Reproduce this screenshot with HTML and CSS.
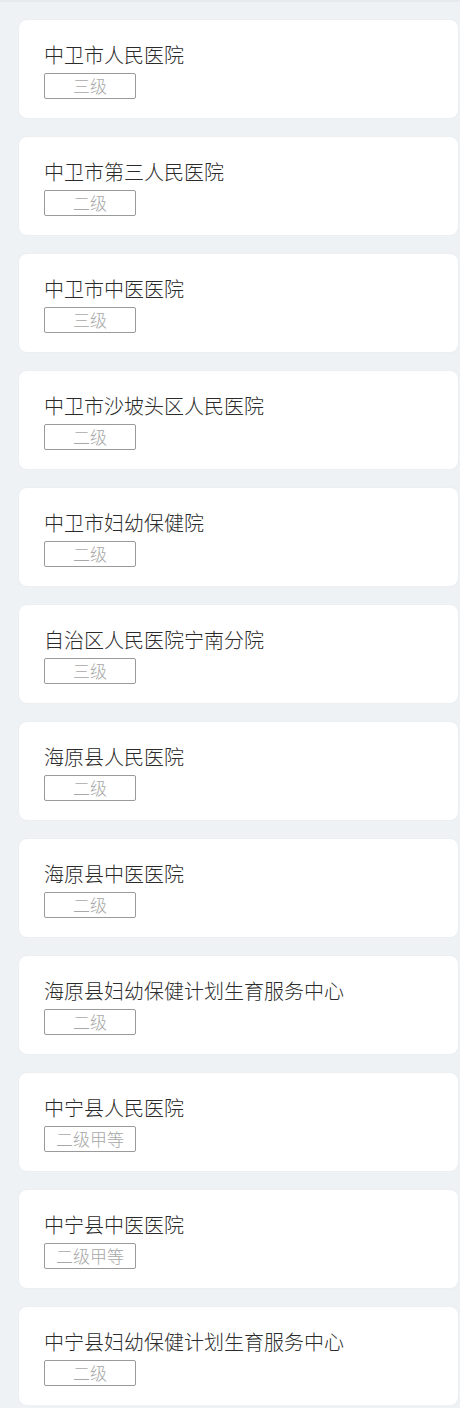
FILE: index.html
```html
<!DOCTYPE html>
<html lang="zh">
<head>
<meta charset="utf-8">
<link rel="stylesheet" href="styles.css">
</head>
<body>
<div class="topbar"></div>
<div class="list">
  <div class="card"><div class="name">中卫市人民医院</div><span class="tag">三级</span></div>
  <div class="card"><div class="name">中卫市第三人民医院</div><span class="tag">二级</span></div>
  <div class="card"><div class="name">中卫市中医医院</div><span class="tag">三级</span></div>
  <div class="card"><div class="name">中卫市沙坡头区人民医院</div><span class="tag">二级</span></div>
  <div class="card"><div class="name">中卫市妇幼保健院</div><span class="tag">二级</span></div>
  <div class="card"><div class="name">自治区人民医院宁南分院</div><span class="tag">三级</span></div>
  <div class="card"><div class="name">海原县人民医院</div><span class="tag">二级</span></div>
  <div class="card"><div class="name">海原县中医医院</div><span class="tag">二级</span></div>
  <div class="card"><div class="name">海原县妇幼保健计划生育服务中心</div><span class="tag">二级</span></div>
  <div class="card"><div class="name">中宁县人民医院</div><span class="tag">二级甲等</span></div>
  <div class="card"><div class="name">中宁县中医医院</div><span class="tag">二级甲等</span></div>
  <div class="card"><div class="name">中宁县妇幼保健计划生育服务中心</div><span class="tag">二级</span></div>
</div>
</body>
</html>
```
FILE: styles.css
```css
html, body {
  margin: 0;
  padding: 0;
  background: #eef2f5;
  font-family: "Noto Sans CJK SC", "Noto Sans", sans-serif;
}
.topbar {
  height: 2px;
  background: #e6eaee;
}
.list {
  display: flex;
  flex-direction: column;
  gap: 19px;
  padding: 18px 2px 0 19px;
}
.card {
  background: #ffffff;
  border-radius: 8px;
  box-shadow: 0 0 2px rgba(0, 0, 0, 0.06);
  height: 98px;
  box-sizing: border-box;
  padding: 22px 26px 0 25px;
  display: flex;
  flex-direction: column;
  align-items: flex-start;
}
.name {
  font-size: 20px;
  line-height: 26px;
  color: #2b2b2b;
  font-weight: 300;
}
.tag {
  margin-top: 5px;
  width: 92px;
  height: 26px;
  box-sizing: border-box;
  border: 1px solid #9a9a9a;
  border-radius: 2px;
  color: #a8a8a8;
  font-size: 17px;
  line-height: 24px;
  text-align: center;
  font-weight: 300;
}
```
